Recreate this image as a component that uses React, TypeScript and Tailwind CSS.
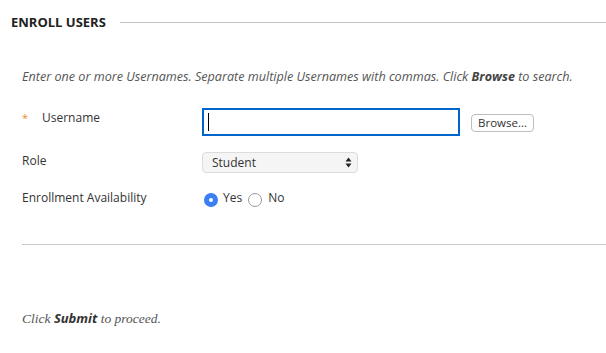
import React from "react";

function App() {
  return (
    <div className="w-[606px] h-[353px] bg-white overflow-hidden font-['Open_Sans',sans-serif] text-[#333]">
      <div className="flex items-center pl-[11px] pt-[13px]">
        <h2 className="text-[13px] font-bold text-[#222] leading-[18px]">ENROLL USERS</h2>
        <div className="flex-1 ml-[14px] h-px bg-[#c4c4c4]" />
      </div>

      <div className="pl-[22px]">
        <p className="mt-[37px] text-[12.6px] italic text-[#555] leading-[18px]">
          Enter one or more Usernames. Separate multiple Usernames with commas. Click{" "}
          <b className="font-bold text-[#444]">Browse</b> to search.
        </p>

        <div className="mt-[22px] flex items-start">
          <div className="w-[180px] pt-px flex items-center text-[12px] leading-[18px]">
            <span className="w-[20px] text-[#f08a24] text-[11px]">*</span>
            <span>Username</span>
          </div>
          <div className="w-[258px] h-[28px] border-2 border-[#0066cc] flex items-center pl-[4px]">
            <div className="w-px h-[18px] bg-black" />
          </div>
          <button className="ml-[11px] mt-[6px] w-[63px] h-[18px] border border-[#bdbdbd] rounded-[4px] bg-white text-[11.5px] text-[#333] leading-none">
            Browse...
          </button>
        </div>

        <div className="mt-[15px] flex items-start">
          <span className="w-[180px] pt-px text-[12px] leading-[18px]">Role</span>
          <div className="mt-px w-[156px] h-[21px] border border-[#dcdcdc] rounded-[4px] bg-[#f5f5f5] flex items-center justify-between pl-[9px] pr-[5px] text-[12px]">
            <span>Student</span>
            <svg width="7" height="11" viewBox="0 0 7 11">
              <path d="M3.5 0.5 L6.5 4.5 L0.5 4.5 Z" fill="#222" />
              <path d="M3.5 10.5 L6.5 6.5 L0.5 6.5 Z" fill="#222" />
            </svg>
          </div>
        </div>

        <div className="mt-[15px] flex items-start h-[18px]">
          <span className="w-[180px] pt-px text-[12px] leading-[18px]">Enrollment Availability</span>
          <div className="flex items-start text-[12px] leading-[18px] pt-px">
            <span className="mt-[4px] ml-[2px] w-[14px] h-[14px] rounded-full bg-[#3b7ff5] flex items-center justify-center">
              <span className="w-[4px] h-[4px] rounded-full bg-white" />
            </span>
            <span className="ml-[5px]">Yes</span>
            <span className="mt-[4px] ml-[6px] w-[14px] h-[14px] rounded-full border border-[#9a9a9a] bg-white" />
            <span className="ml-[6px]">No</span>
          </div>
        </div>

        <div className="mt-[38px] h-px bg-[#c8c8c8]" />

        <p className="mt-[64px] text-[13px] italic text-[#555] leading-[18px]">
          <span className="font-['Liberation_Serif',serif] text-[13.5px]">Click </span>
          <b className="font-bold text-[#333]">Submit</b>
          <span className="font-['Liberation_Serif',serif] text-[13.5px]"> to proceed.</span>
        </p>
      </div>
    </div>
  );
}

export default App;
